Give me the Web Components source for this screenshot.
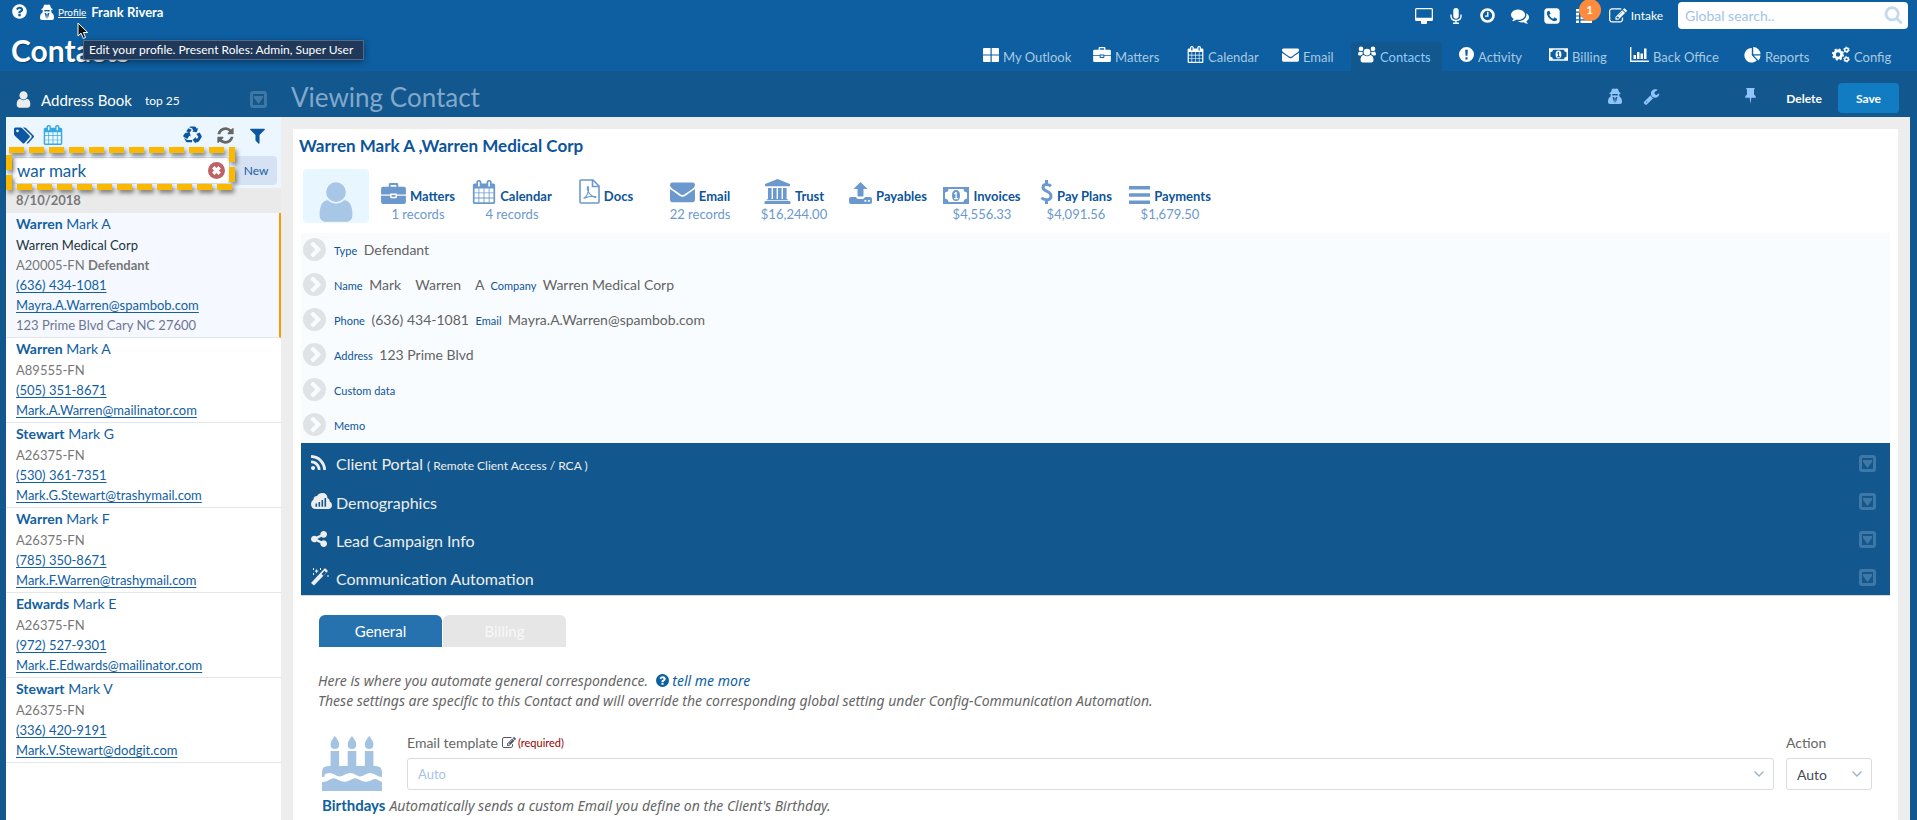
<!DOCTYPE html>
<html lang="en">
<head>
<meta charset="utf-8">
<title>Contacts</title>
<style>
html, body { margin: 0; }
body { font-family: Lato, "Noto Sans", sans-serif; font-size: 13px; line-height: 20px; color: #666; background: #12578d; }
</style>
</head>
<body>
<crm-app></crm-app>
<script>
const FA = '0 0 1792 1792';
const ICONS = {
  user: [FA, '<path d="M1536 1399q0 109-62.5 187t-150.5 78h-854q-88 0-150.5-78t-62.5-187q0-85 8.5-160.5t31.5-152 58.5-131 94-89 134.5-34.5q131 128 313 128t313-128q76 0 134.5 34.5t94 89 58.5 131 31.5 152 8.5 160.5zm-256-887q0 159-112.5 271.5t-271.5 112.5-271.5-112.5-112.5-271.5 112.5-271.5 271.5-112.5 271.5 112.5 112.5 271.5z"/>'],
  help: [FA, '<path d="M1024 1376v-192q0-14-9-23t-23-9h-192q-14 0-23 9t-9 23v192q0 14 9 23t23 9h192q14 0 23-9t9-23zm256-672q0-88-55.5-163t-138.5-116-170-41q-243 0-371 213-15 24 8 42l132 100q7 6 19 6 16 0 25-12 53-68 86-92 34-24 86-24 48 0 85.5 26t37.5 59q0 38-20 61t-68 45q-63 28-115.5 86.5t-52.5 125.5v36q0 14 9 23t23 9h192q14 0 23-9t9-23q0-19 21.5-49.5t54.5-49.5q32-18 49-28.5t46-35 44.5-48 28-60.5 12.5-81zm384 192q0 209-103 385.5t-279.5 279.5-385.5 103-385.5-103-279.5-279.5-103-385.5 103-385.5 279.5-279.5 385.5-103 385.5 103 279.5 279.5 103 385.5z"/>'],
  alert: ['0 0 16 16', '<path fill-rule="evenodd" d="M8 0a8 8 0 1 1 0 16A8 8 0 0 1 8 0zM6.6 2.8l.4 6.6h2l.4-6.6zM6.8 11v2.4h2.4V11z"/>'],
  calendar: [FA, '<path d="M192 1664h288v-288h-288v288zm352 0h320v-288h-320v288zm-352-352h288v-320h-288v320zm352 0h320v-320h-320v320zm-352-384h288v-288h-288v288zm736 736h320v-288h-320v288zm-384-736h320v-288h-320v288zm768 736h288v-288h-288v288zm-384-352h320v-320h-320v320zm-352-864v-288q0-13-9.5-22.5t-22.5-9.5h-64q-13 0-22.5 9.5t-9.5 22.5v288q0 13 9.5 22.5t22.5 9.5h64q13 0 22.5-9.5t9.5-22.5zm736 864h288v-320h-288v320zm-384-384h320v-288h-320v288zm384 0h288v-288h-288v288zm32-480v-288q0-13-9.5-22.5t-22.5-9.5h-64q-13 0-22.5 9.5t-9.5 22.5v288q0 13 9.5 22.5t22.5 9.5h64q13 0 22.5-9.5t9.5-22.5zm384-64v1280q0 52-38 90t-90 38h-1408q-52 0-90-38t-38-90v-1280q0-52 38-90t90-38h128v-96q0-66 47-113t113-47h64q66 0 113 47t47 113v96h384v-96q0-66 47-113t113-47h64q66 0 113 47t47 113v96h128q52 0 90 38t38 90z"/>'],
  mail: [FA, '<path d="M1792 710v794q0 66-47 113t-113 47h-1472q-66 0-113-47t-47-113v-794q44 49 101 87 362 246 497 345 57 42 92.5 65.5t94.5 48 110 24.5h2q51 0 110-24.5t94.5-48 92.5-65.5q170-123 498-345 57-39 100-87zm0-294q0 79-49 151t-122 123q-376 261-468 325-10 7-42.5 31t-54 38.5-52 32.5-57.5 27-50 9h-2q-23 0-50-9t-57.5-27-52-32.5-54-38.5-42.5-31q-91-64-262-182.5t-205-142.5q-62-42-117-115.5t-55-136.5q0-78 41.5-130t118.5-52h1472q65 0 112.5 47t47.5 113z"/>'],
  search: [FA, '<path d="M1216 832q0-185-131.5-316.5t-316.5-131.5-316.5 131.5-131.5 316.5 131.5 316.5 316.5 131.5 316.5-131.5 131.5-316.5zm512 832q0 52-38 90t-90 38q-54 0-90-38l-343-342q-179 124-399 124-143 0-273.5-55.5t-225-150-150-225-55.5-273.5 55.5-273.5 150-225 225-150 273.5-55.5 273.5 55.5 225 150 150 225 55.5 273.5q0 220-124 399l343 343q37 37 37 90z"/>'],
  rss: ['192 128 1408 1408', '<path d="M576 1344q0 80-56 136t-136 56-136-56-56-136 56-136 136-56 136 56 56 136zm512 123q2 28-17 48-18 21-47 21h-135q-25 0-43-16.5t-20-41.5q-22-229-184.5-391.5t-391.5-184.5q-25-2-41.5-20t-16.5-43v-135q0-29 21-47 17-17 43-17h5q160 13 306 80.5t259 181.5q114 113 181.5 259t80.5 306zm512 2q2 27-18 47-18 20-46 20h-143q-26 0-44.5-17.5t-19.5-42.5q-12-215-101-408.5t-231.5-336-336-231.5-408.5-102q-25-1-42.5-19.5t-17.5-43.5v-143q0-28 20-46 18-18 44-18h3q262 13 501.5 120t425.5 294q187 186 294 425.5t120 501.5z"/>'],
  refresh: [FA, '<path d="M1639 1056q0 5-1 7-64 268-268 434.5t-478 166.5q-146 0-282.5-55t-243.5-157l-129 129q-19 19-45 19t-45-19-19-45v-448q0-26 19-45t45-19h448q26 0 45 19t19 45-19 45l-137 137q71 66 161 102t187 36q134 0 250-65t186-179q11-17 53-117 8-23 30-23h192q13 0 22.5 9.5t9.5 22.5zm25-800v448q0 26-19 45t-45 19h-448q-26 0-45-19t-19-45 19-45l138-138q-148-137-349-137-134 0-250 65t-186 179q-11 17-53 117-8 23-30 23h-199q-13 0-22.5-9.5t-9.5-22.5v-7q65-268 270-434.5t480-166.5q146 0 284 55.5t245 156.5l130-129q19-19 45-19t45 19 19 45z"/>'],
  filter: [FA, '<path d="M1595 295q17 41-14 70l-493 493v742q0 42-39 59-13 5-25 5-27 0-45-19l-256-256q-19-19-19-45v-486l-493-493q-31-29-14-70 17-39 59-39h1280q42 0 59 39z"/>'],
  share: ['128 128 1536 1536', '<path d="M1344 1024q133 0 226.5 93.5t93.5 226.5-93.5 226.5-226.5 93.5-226.5-93.5-93.5-226.5q0-12 2-34l-360-180q-92 86-218 86-133 0-226.5-93.5t-93.5-226.5 93.5-226.5 226.5-93.5q126 0 218 86l360-180q-2-22-2-34 0-133 93.5-226.5t226.5-93.5 226.5 93.5 93.5 226.5-93.5 226.5-226.5 93.5q-126 0-218-86l-360 180q2 22 2 34t-2 34l360 180q92-86 218-86z"/>'],
  chevron: ['128 128 1536 1536', '<path d="M845 1395l454-454q19-19 19-45t-19-45l-454-454q-19-19-45-19t-45 19l-102 102q-19 19-19 45t19 45l307 307-307 307q-19 19-19 45t19 45l102 102q19 19 45 19t45-19zm819-499q0 209-103 385.5t-279.5 279.5-385.5 103-385.5-103-279.5-279.5-103-385.5 103-385.5 279.5-279.5 385.5-103 385.5 103 279.5 279.5 103 385.5z"/>'],
  edit: [FA, '<path d="M888 1184l116-116-152-152-116 116v56h96v96h56zm440-720q-16-16-33 1l-350 350q-17 17-1 33t33-1l350-350q17-17 1-33zm80 594v190q0 119-84.5 203.5t-203.5 84.5h-832q-119 0-203.5-84.5t-84.5-203.5v-832q0-119 84.5-203.5t203.5-84.5h832q63 0 117 25 15 7 18 23 3 17-9 29l-49 49q-14 14-32 8-23-6-45-6h-832q-66 0-113 47t-47 113v832q0 66 47 113t113 47h832q66 0 113-47t47-113v-126q0-13 9-22l64-64q15-15 35-7t20 29zm-96-738l288 288-672 672h-288v-288zm444 132l-92 92-288-288 92-92q28-28 68-28t68 28l152 152q28 28 28 68t-28 68z"/>'],
  wrench: [FA, '<path d="M448 1472q0-26-19-45t-45-19-45 19-19 45 19 45 45 19 45-19 19-45zm644-420l-682 682q-37 37-90 37-52 0-91-37l-106-108q-38-36-38-90 0-53 38-91l681-681q39 98 114.5 173.5t173.5 114.5zm634-435q0 39-23 106-47 134-164.5 217.5t-258.5 83.5q-185 0-316.5-131.5t-131.5-316.5 131.5-316.5 316.5-131.5q58 0 121.5 16.5t107.5 46.5q16 11 16 28t-16 28l-293 169v224l193 107q5-3 79-48.5t135.5-81 70.5-35.5q15 0 23.5 10t8.5 25z"/>'],
  comments: [FA, '<path d="M1408 768q0 139-94 257t-256.5 186.5-353.5 68.5q-86 0-176-16-124 88-278 128-36 9-86 16h-3q-11 0-20.5-8t-11.5-21q-1-3-1-6.5t.5-6.5 2-6l2.5-5 3.5-5.5 4-5 4.5-5 4-4.5q5-6 23-25t26-29.5 22.5-29 25-38.5 20.5-44q-124-72-195-177t-71-224q0-139 94-257t256.5-186.5 353.5-68.5 353.5 68.5 256.5 186.5 94 257zm384 256q0 120-71 224.5t-195 176.5q10 24 20.5 44t25 38.5 22.5 29 26 29.5 23 25q1 1 4 4.5t4.5 5 4 5 3.5 5.5l2.5 5 2 6 .5 6.5-1 6.5q-3 14-13 22t-22 7q-50-7-86-16-154-40-278-128-90 16-176 16-271 0-472-132 58 4 88 4 161 0 309-45t264-129q125-92 192-212t67-254q0-77-23-152 129 71 204 178t75 230z"/>'],
  phone: [FA, '<path d="M1408 1193q0-11-2-16t-18-16.5-40.5-25-47.5-26.5-45.5-25-28.5-15q-5-3-19-13t-25-15-21-5q-15 0-36.5 20.5t-39.5 45-38.5 45-33.5 20.5q-7 0-16.5-3.5t-15.5-6.5-17-9.5-14-8.5q-99-55-170-126.5t-127-170.5q-2-3-8.5-14t-9.5-17-6.5-15.5-3.5-16.5q0-13 20.5-33.5t45-38.5 45-39.5 20.5-36.5q0-10-5-21t-15-25-13-19q-3-6-15-28.5t-25-45.5-26.5-47.5-25-40.5-16.5-18-16-2q-48 0-101 22-46 21-80 94.5t-34 130.5q0 16 2.5 34t5 30.5 9 33 10 29.5 12.5 33 11 30q60 164 216.5 320.5t320.5 216.5q6 2 30 11t33 12.5 29.5 10 33 9 30.5 5 34 2.5q57 0 130.5-34t94.5-80q22-53 22-101zm256-777v960q0 119-84.5 203.5t-203.5 84.5h-960q-119 0-203.5-84.5t-84.5-203.5v-960q0-119 84.5-203.5t203.5-84.5h960q119 0 203.5 84.5t84.5 203.5z"/>'],
  caret: ['0 0 17 17', '<path fill-rule="evenodd" d="M3 0h11a3 3 0 0 1 3 3v11a3 3 0 0 1-3 3H3a3 3 0 0 1-3-3V3a3 3 0 0 1 3-3zm0 3v11h11V3z"/><path d="M4 5h9v2l-4.5 6L4 7z"/>'],
  spy: ['0 0 14 16', '<path fill-rule="evenodd" d="M4 1Q5 0 6 .8h2Q9 0 10 1l1 3 1.500 1v1h-1.300l.3 2.400Q14 9.500 14 13v1q0 2-2 2H2q-2 0-2-2v-1q0-3.500 2.500-4.600L2.800 6H1.500V5L3 4zM4.300 6v1.500h2.200l.5-.8.5.8h2.200V6zM4.600 9l1.700 6 .5-4.500L6 9zM9.400 9l-1.700 6-.5-4.500L8 9z"/>'],
  grid: ['0 0 16 14', '<path d="M1 0h6.500v6.400H0V1q0-1 1-1zM8.700 0H15q1 0 1 1v5.400H8.700zM0 7.600h7.500V14H1q-1 0-1-1zM8.700 7.600H16V13q0 1-1 1H8.700z"/>'],
  briefcase: ['0 0 26 22', '<path fill-rule="evenodd" d="M8 4V1.500Q8 0 9.500 0h7Q18 0 18 1.500V4h6q2 0 2 2v6h-9.500v-1h-7v1H0V6q0-2 2-2zM10 4h6V2h-6zM0 13.300h9.500V15q0 1 1 1h5q1 0 1-1v-1.700H26V20q0 2-2 2H2q-2 0-2-2zM11 12.500h4v2h-4z"/>'],
  users: ['0 0 18 16', '<circle cx="3" cy="2.400" r="2.300"/><circle cx="15" cy="2.400" r="2.300"/><circle cx="9" cy="5.600" r="3.400"/><path d="M1.500 5Q3 6 4.700 5.200L4.600 8Q3.500 8 2.800 9H1.600Q0 9 0 7.800 0 5.500 1.500 5zM16.500 5Q15 6 13.300 5.200l.1 2.800q1.100 0 1.800 1h1.200Q18 9 18 7.800 18 5.500 16.500 5zM5.700 8.500Q9 11.200 12.300 8.500q3.200.5 3.200 5 0 2.500-2.300 2.500H4.800q-2.300 0-2.300-2.500 0-4.500 3.200-5z"/>'],
  money: ['0 0 26 17', '<path fill-rule="evenodd" d="M0 0h26v17H0zM5.500 2q0 3-3.500 3.500v6Q5.500 12 5.500 15h15q0-3 3.500-3.500v-6Q20.500 5 20.500 2zM13 3q4 0 4 5.500T13 14 9 8.500 13 3zm-.5 2L11 6.700l.7.8.8-.5V11H11v1.200h4.200V11h-1.400V5z"/>'],
  chart: ['0 0 19 15', '<path d="M0 0h1.400v13.600H19V15H0zM3.500 8H6v4H3.500zM7 5h2.500v7H7zM10.500 6.500H13V12h-2.500zM14 1.500h2.500V12H14z"/>'],
  pie: ['0 0 16 16', '<path d="M7.300 1v7.300l5 5.200A7.300 7.300 0 1 1 7.300 1zM8.700 0A7.300 7.300 0 0 1 16 7.300H8.700zM9.200 8.600H16a7 7 0 0 1-2 4.800z"/>'],
  cogs: ['0 0 18 16', '<circle cx="6" cy="8" r="3.600" fill="none" stroke="currentColor" stroke-width="2.800"/><circle cx="6" cy="8" r="5" fill="none" stroke="currentColor" stroke-width="2.200" stroke-dasharray="1.960 1.966"/><g fill="none" stroke="currentColor"><circle cx="14.500" cy="3.300" r="1.800" stroke-width="1.500"/><circle cx="14.500" cy="3.300" r="2.800" stroke-dasharray="1.400 1.530"/><circle cx="14.500" cy="12.700" r="1.800" stroke-width="1.500"/><circle cx="14.500" cy="12.700" r="2.800" stroke-dasharray="1.400 1.530"/></g>'],
  desktop: ['0 0 18 16', '<path fill-rule="evenodd" d="M1.500 0h15Q18 0 18 1.500v10q0 1.500-1.500 1.500H12v1.500q.300 1.500-1 1.500H7q-1.300 0-1-1.500V13H1.500Q0 13 0 11.500v-10Q0 0 1.500 0zM1.300 1.300v8.400h15.400V1.300z"/>'],
  mic: ['0 0 12 16', '<path d="M6 0q2.700 0 2.700 2.700V8Q8.700 10.700 6 10.700T3.300 8V2.700Q3.300 0 6 0z"/><path d="M1 6.500V8q0 4.500 5 4.500T11 8V6.500M6 12.500V15M3 15.200h6" fill="none" stroke="currentColor" stroke-width="1.400"/>'],
  clock: ['0 0 16 16', '<circle cx="8" cy="8" r="6.400" fill="none" stroke="currentColor" stroke-width="2.800"/><path d="M8.300 4v4.700H5.300" fill="none" stroke="currentColor" stroke-width="1.500"/>'],
  list: ['0 0 16 14', '<path d="M0 0h3v2.600H0zM4.500 0H16v2.600H4.500zM0 3.800h3v2.600H0zM4.500 3.800H16v2.600H4.500zM0 7.600h3v2.600H0zM4.500 7.600H16v2.600H4.500zM0 11.400h3V14H0zM4.500 11.400H16V14H4.500z"/>'],
  pin: ['0 0 11 16', '<path d="M2 0h7q.9 0 .9.700t-.9.800v5q2 1.200 2 3.300H6.300L5.500 16l-.8-6.200H0q0-2.100 2-3.300v-5q-.9-.1-.9-.8T2 0z"/>'],
  tags: ['0 0 20 17', '<path fill-rule="evenodd" d="M1.500.5h5q1 0 2 1l7 7q1 1 0 2l-5 5.500q-1 1-2 0L1 9Q0 8 0 7V2Q0 .5 1.500.5zM3.500 2.500a1.400 1.400 0 1 0 .01 0z"/><path d="M9 .5h1.500q1 0 2 1l7 7q1 1 0 2l-5 5.500q-1 1-2 .3l4.600-5.300q1.200-1.500 0-2.700z"/>'],
  recycle: ['0 0 20 18', '<path d="M6.500 1Q7 0 8 0h4q1 0 1.600 1l1 1.500L16 1.700l-1.500 5-5-1 1.400-.9L9.500 2zM5.700 2l3.500 1.800L6.800 7.500 3.400 5.400zM2 7.500l5-1 1.200 5-1.500-.8-2.200 3.800L.5 11.800Q0 11 .5 10l1.500-2zM1 13l3.500 2.500h5V18H4.500q-1 0-1.500-1zM17.500 7l2 3.500q.5 1 0 1.800l-2.300 4Q16.500 18 15 18h-1.500v1.500l-3.500-4 3.500-3.500v1.700h1.700l1-2-2.200-3z" transform="scale(1 .92)"/>'],
  clear: ['0 0 16 16', '<circle cx="8" cy="8" r="8"/><path d="M5 5l6 6M11 5l-6 6" stroke="#fff" stroke-width="3.200"/>'],
  pdf: ['0 0 21 25', '<path d="M1 2q0-1 1-1h12l6 6v16q0 1-1 1H2q-1 0-1-1zM13.500 1v6.500H20" fill="none" stroke="currentColor" stroke-width="1.600"/><path d="M4.500 19.500q3-1 5-7.500.5-3.500-.5-4.500-1.500 1 0 4.500 2 4.500 7 6.500 1.500 0 .5-1-5-1-12 2z" fill="none" stroke="currentColor" stroke-width="1.100"/>'],
  bank: ['0 0 27 25', '<path d="M13.500 0L26 5v1.700q0 .6-1 .6H2q-1 0-1-.6V5zM4 9h3.600v11H9V9h3.600v11H14V9h3.600v11H19V9h3.600v11q1.600.2 1.600 1.200H2.500Q2.500 20.200 4 20zM1.500 22h24q1 0 1 1.500V25H.5v-1.500q0-1.500 1-1.500z"/>'],
  upload: ['0 0 23 22', '<path fill-rule="evenodd" d="M11.500 0l7 7h-4v6.500q0 1-1 1h-4q-1 0-1-1V7h-4zM0 17q0-2 2-2h5q.7 2 2.500 2h4q1.800 0 2.500-2h5q2 0 2 2v3q0 2-2 2H2q-2 0-2-2zM15.500 18v1.800h1.800V18zM19 18v1.800h1.800V18z"/>'],
  dollar: ['0 0 13 24', '<path d="M11 6.200Q9 4.400 6.500 4.400 3 4.400 3 7.300q0 2.500 3.500 3.900 4.500 1.700 4.500 5 0 3.600-4.500 3.600-3 0-5-2M6.500 0v4.500M6.500 19.500V24" fill="none" stroke="currentColor" stroke-width="3"/>'],
  bars: ['0 0 21 18', '<path d="M0 0h21v3.600H0zM0 7.200h21v3.600H0zM0 14.400h21V18H0z"/>'],
  cloud: ['0 0 21 16', '<path fill-rule="evenodd" d="M5 16q-5 0-5-5 0-3 2.500-4.500Q2.500 3 6 3 7.500 0 11.500 0q4.500 0 5 5Q19 6 18.800 8.500 21 9.500 21 12q0 4-4 4zM4.500 10.500v3.200h1.600v-3.200zM7.500 9v4.700h1.600V9zM10.500 7v6.700h1.600V7zM13.500 5v8.700h1.600V5z"/>'],
  wand: ['0 0 18 18', '<path fill-rule="evenodd" d="M14.500.5l2 2Q17 3 16.500 3.500L3 17.500 0 15 13.500.5q.5-.5 1 0zM10.500 6l1.700 1.700 3-3.200-1.700-1.700z"/><path d="M5.500.8l.7 1.600 1.600.7-1.600.7-.7 1.600-.7-1.600-1.600-.7 1.600-.7zM2 0h1v2H2zM9 0h1v2H9zM2 5h1v2H2zM16.500 7h1v2h-1z"/>'],
  cake: ['0 0 60 55', '<path transform="scale(1.071 1)" d="M12 0q4 5 4 8.500Q16 13 12 13T8 8.500Q8 5 12 0zM28 0q4 5 4 8.500Q32 13 28 13t-4-4.500Q24 5 28 0zM44 0q4 5 4 8.500Q48 13 44 13t-4-4.500Q40 5 44 0zM8 15h8v15h8V15h8v15h8V15h8v15h2q6 0 6 6v5q-3 0-6-2.200-5-3.500-10 0-4.500 3.500-8.500 0-5-3.800-10.500 0-4.500 3.500-9 0-5-3.500-10 0Q4 41 0 41v-5q0-6 6-6h2zM0 46q4 0 7-2.300 4-3 8 0 6 4.300 12 0 4-3 8 0 6 4.300 12 0Q50 42 54 45l2 1v9H0z"/>'],
  down: ['0 0 12 8', '<path d="M1.500 1.500L6 6l4.500-4.500" fill="none" stroke="currentColor" stroke-width="1.400"/>'],
  cursor: ['0 0 12 18', '<path d="M1 1v13l3-2.800L6.300 16.500l2.300-1L6.400 10.500h4.300z" fill="#111" stroke="#fff" stroke-width="1"/>']
};

/* Registers an element whose shadow root is built from a template string. */
function component(name, css, html) {
  customElements.define(name, class extends HTMLElement {
    connectedCallback() {
      if (this.shadowRoot) return;
      const root = this.attachShadow({ mode: 'open' });
      root.innerHTML = '<style>*{box-sizing:border-box}' + css + '</style>' +
        (typeof html === 'function' ? html(this) : html);
    }
  });
}

component('x-icon',
  ':host{display:inline-flex;flex:none;vertical-align:middle}svg{display:block;width:100%;height:100%;fill:currentColor}',
  el => {
    const [box, art] = ICONS[el.getAttribute('name')];
    el.style.width = el.getAttribute('w') + 'px';
    el.style.height = (el.getAttribute('h') || el.getAttribute('w')) + 'px';
    return `<svg viewBox="${box}" aria-hidden="true">${art}</svg>`;
  });

component('nav-link', `
  :host{display:flex;justify-content:flex-start}
  a{display:flex;align-items:center;gap:4px;height:29px;padding:0 11px 0 7px;color:#a9c9e2;text-decoration:none;border-radius:4px 4px 0 0;white-space:nowrap}
  x-icon{color:#fff;margin-bottom:4px}
  :host([current]) a{background:#12578d;color:#90cbff}`,
  el => `<a href="#"><x-icon name="${el.getAttribute('icon')}" w="${el.getAttribute('w')}" h="${el.getAttribute('h')}"></x-icon><slot></slot></a>`);

component('top-bar', `
  :host{display:block;background:#0d5fa1;color:#fff}
  .row{display:flex;align-items:center;justify-content:space-between}
  .one{height:31px;padding:0 9px 0 11px}
  .two{height:40px;padding:0 12px 0 11px;align-items:flex-end}
  .me,.tools{display:flex;align-items:center}
  .me{position:relative;margin-bottom:8px}
  .me a{color:#fff;font-size:10px;margin:0 5px 0 4px}
  .me x-icon+x-icon{margin-left:12px}
  .cell{display:flex;justify-content:center;width:32px;position:relative}
  .badge{position:absolute;left:11px;top:-10px;width:22px;height:22px;border-radius:50%;background:#ff8b3c;font:bold 11px/22px Lato,sans-serif;text-align:center}
  .intake{display:flex;align-items:center;gap:4px;color:#fff;font-size:12px;text-decoration:none;margin:0 15px 0 9px}
  .search{display:flex;align-items:center;width:230px;height:27px;background:#fff;border-radius:4px;padding:0 5px 0 7px;color:#c3d9ee}
  .search x-icon{margin:0 0 2px}
  input{flex:1;min-width:0;border:0;outline:0;background:none;font:14px Lato,sans-serif;padding:0}
  input::placeholder{color:#9fc4e8}
  h1{margin:0 0 2px;font:bold 30px/38px Lato,sans-serif;text-shadow:1px 1px 1px #0a3f70}
  nav{display:grid;grid-template-columns:110px 94px 95px 76px 101px 90px 81px 114px 88px 80px}
  .arrow{position:absolute;left:66px;top:20px;z-index:3}
  .tip{position:absolute;left:72px;top:38px;z-index:2;padding:0 10px 0 5px;background:#20395a;border:1px solid #536a86;box-shadow:0 2px 6px #0006;font:12px/18px Lato,sans-serif;white-space:nowrap}`, `
  <div class="row one">
    <div class="me"><x-icon name="help" w="17"></x-icon><x-icon name="spy" w="14" h="16"></x-icon><a href="#">Profile</a><b>Frank Rivera</b>
      <x-icon class="arrow" name="cursor" w="12" h="18"></x-icon><span class="tip" role="tooltip">Edit your profile. Present Roles: Admin, Super User</span></div>
    <div class="tools">
      <span class="cell"><x-icon name="desktop" w="18" h="16"></x-icon></span>
      <span class="cell"><x-icon name="mic" w="12" h="16"></x-icon></span>
      <span class="cell"><x-icon name="clock" w="15"></x-icon></span>
      <span class="cell"><x-icon name="comments" w="18"></x-icon></span>
      <span class="cell"><x-icon name="phone" w="18"></x-icon></span>
      <span class="cell"><x-icon name="list" w="16" h="14"></x-icon><span class="badge">1</span></span>
      <a class="intake" href="#"><x-icon name="edit" w="18"></x-icon>Intake</a>
      <label class="search"><input aria-label="Global search" placeholder="Global search.."><x-icon name="search" w="19"></x-icon></label>
    </div>
  </div>
  <div class="row two"><h1>Contacts</h1>
    <nav>
      <nav-link icon="grid" w="16" h="14">My Outlook</nav-link>
      <nav-link icon="briefcase" w="18" h="15">Matters</nav-link>
      <nav-link icon="calendar" w="17" h="17">Calendar</nav-link>
      <nav-link icon="mail" w="17" h="17">Email</nav-link>
      <nav-link icon="users" w="18" h="17" current>Contacts</nav-link>
      <nav-link icon="alert" w="15" h="15">Activity</nav-link>
      <nav-link icon="money" w="19" h="13">Billing</nav-link>
      <nav-link icon="chart" w="19" h="15">Back Office</nav-link>
      <nav-link icon="pie" w="17" h="16">Reports</nav-link>
      <nav-link icon="cogs" w="18" h="17">Config</nav-link>
    </nav>
  </div>`);

component('title-bar', `
  :host{display:flex;align-items:center;height:46px;background:#12578d;color:#fff;padding:0 18px 0 14px}
  .book{display:flex;align-items:center;flex:none;width:277px;padding-top:11px;padding-right:24px;font-size:15px}
  .book small{font-size:12px;margin:2px auto 0 13px}
  .book x-icon:first-child{margin-right:8px;color:#ececec}
  .fade{color:#3f77a5}
  h2{margin:6px auto 0 0;font:26px/32px Lato,sans-serif;color:#82a8cb}
  .act{display:flex;align-items:center;color:#90c5fb;padding-top:8px}
  .act x-icon{margin-bottom:4px}
  .spy{margin-right:21px}
  .pin{margin:0 17px 0 85px}
  button{border:0;background:none;color:#fff;font:bold 12px Lato,sans-serif;height:30px;padding:0;width:62px;border-radius:4px}
  .save{background:#127cc3;width:61px;margin-left:3px}`, `
  <div class="book"><x-icon name="user" w="19"></x-icon>Address Book <small>top 25</small><x-icon class="fade" name="caret" w="17"></x-icon></div>
  <h2>Viewing Contact</h2>
  <div class="act"><x-icon class="spy" name="spy" w="14" h="16"></x-icon><x-icon name="wrench" w="17"></x-icon><x-icon class="pin" name="pin" w="11" h="16"></x-icon><button>Delete</button><button class="save">Save</button></div>`);

component('contact-item', `
  :host{display:block;padding:0 10px 2px;border-bottom:1px solid #e4e7ea;color:#777}
  :host([selected]){background:#f5f9ff;border-right:2px solid #f90}
  div{height:20px;white-space:nowrap}
  .name{height:22px;font-size:14px;line-height:22px;color:#12609f}
  .org{color:#1c3440}.addr{color:#6d7592}
  a{color:#12609f;text-underline-offset:2px}`,
  el => {
    const a = n => el.getAttribute(n);
    return `<div class="name"><b>${a('last')}</b> ${a('first')}</div>` +
      (a('org') ? `<div class="org">${a('org')}</div>` : '') +
      `<div>${a('ref')}${a('role') ? ` <b>${a('role')}</b>` : ''}</div><div><a href="#">${a('phone')}</a></div><div><a href="#">${a('mail')}</a></div>` +
      (a('addr') ? `<div class="addr">${a('addr')}</div>` : '');
  });

component('contact-list', `
  :host{display:block;background:#fff}
  .head{background:#ecf6fe;height:71px}
  .tools{display:flex;align-items:center;height:36px;padding:0 14px 0 8px;color:#0c57a0}
  .cal{margin:0 auto 0 9px;color:#35a9e0}
  .sync{margin:0 13px 0 14px;color:#666}
  .find{display:flex;align-items:center;gap:5px;padding:3px 4px 0 6px;position:relative}
  label{flex:1;min-width:0;display:flex;align-items:center;height:27px;background:#fff;border:1px solid #d5dbe2;border-radius:4px;padding:0 4px;color:#bf6265}
  input{flex:1;min-width:0;border:0;outline:0;padding:0;background:none;font:17px Lato,sans-serif;color:#12609f}
  button{border:0;border-radius:4px;width:42px;height:29px;background:#d6e2f3;color:#12609f;font:12px Lato,sans-serif;padding:0}
  .mark{position:absolute;left:-3px;top:-8px;width:238px;height:49px;overflow:visible;filter:drop-shadow(2px 3px 2px #0007);pointer-events:none}
  .date{height:25px;line-height:25px;padding-left:10px;background:#eaeaea;font-weight:bold;color:#777}`, `
  <div class="head">
    <div class="tools"><x-icon name="tags" w="20" h="17"></x-icon><x-icon class="cal" name="calendar" w="20"></x-icon><x-icon name="recycle" w="19" h="18"></x-icon><x-icon class="sync" name="refresh" w="19"></x-icon><x-icon name="filter" w="19"></x-icon></div>
    <div class="find"><label><input aria-label="Find a contact" value="war mark"><x-icon name="clear" w="17"></x-icon></label><button>New</button>
      <svg class="mark" aria-hidden="true"><rect x="6" y="5" width="223" height="37" fill="none" stroke="#fbb800" stroke-width="6" stroke-dasharray="15 5"/></svg></div>
  </div>
  <div class="date">8/10/2018</div>
  <contact-item selected last="Warren" first="Mark A" org="Warren Medical Corp" ref="A20005-FN" role="Defendant" phone="(636) 434-1081" mail="Mayra.A.Warren@spambob.com" addr="123 Prime Blvd Cary NC 27600"></contact-item>
  <contact-item last="Warren" first="Mark A" ref="A89555-FN" phone="(505) 351-8671" mail="Mark.A.Warren@mailinator.com"></contact-item>
  <contact-item last="Stewart" first="Mark G" ref="A26375-FN" phone="(530) 361-7351" mail="Mark.G.Stewart@trashymail.com"></contact-item>
  <contact-item last="Warren" first="Mark F" ref="A26375-FN" phone="(785) 350-8671" mail="Mark.F.Warren@trashymail.com"></contact-item>
  <contact-item last="Edwards" first="Mark E" ref="A26375-FN" phone="(972) 527-9301" mail="Mark.E.Edwards@mailinator.com"></contact-item>
  <contact-item last="Stewart" first="Mark V" ref="A26375-FN" phone="(336) 420-9191" mail="Mark.V.Stewart@dodgit.com"></contact-item>`);

component('stat-link', `
  :host{display:flex;flex-direction:column;align-items:center;white-space:nowrap;color:#6c99cd}
  a{display:flex;align-items:flex-end;gap:4px;height:26px;color:#0d549b;font-weight:bold;text-decoration:none}
  span{line-height:16px}x-icon{color:#6c99cd}
  div{line-height:20px}`,
  el => `<a href="#"><x-icon name="${el.getAttribute('icon')}" w="${el.getAttribute('w')}" h="${el.getAttribute('h')}"></x-icon><span><slot></slot></span></a><div>${el.getAttribute('value') || ''}</div>`);

component('detail-row', `
  :host{display:flex;align-items:flex-start;gap:8px;height:35px;padding:5px 2px;color:#636363;font-size:14px}
  x-icon{color:#dfe3e6}
  p{margin:0;line-height:23px;white-space:pre}
  ::slotted(small){font-size:11px;color:#0d549b;margin-right:3px}
  ::slotted(small:not(:first-child)){margin-left:3px}`,
  '<x-icon name="chevron" w="23"></x-icon><p><slot></slot></p>');

component('section-bar', `
  :host{display:flex;align-items:center;height:38px;background:#12578d;color:#eee;font-size:16px;padding:5px 14px 0 10px}
  .ico{width:25px;display:flex;margin-bottom:4px}
  .t{flex:1}
  ::slotted(small){font-size:12px}
  .fade{color:#3f77a5;margin-bottom:2px}`,
  el => `<span class="ico"><x-icon name="${el.getAttribute('icon')}" w="${el.getAttribute('w')}" h="${el.getAttribute('h')}"></x-icon></span><span class="t"><slot></slot></span><x-icon class="fade" name="caret" w="17"></x-icon>`);

component('pick-field', `
  :host{display:flex;flex-direction:column}
  label{color:#666;font-size:14px;line-height:20px;margin-bottom:5px;display:flex;align-items:center;gap:4px}
  small{color:#900;font-size:11px}x-icon{color:#556}
  label x-icon{margin-right:-2px}
  .box{position:relative;display:flex}
  select{appearance:none;width:100%;height:32px;border:1px solid #d9dbdd;border-radius:3px;background:#fff;padding:0 10px;font:14px Lato,sans-serif;color:#444b55}
  :host([empty]) select{color:#a5c4e6;font-size:13px}
  .box x-icon{position:absolute;right:9px;top:12px;color:#9fb2c8;pointer-events:none}`,
  el => `<label for="s">${el.getAttribute('label')}${el.hasAttribute('required') ? '<x-icon name="edit" w="14"></x-icon><small>(required)</small>' : ''}</label>
  <div class="box"><select id="s"><option>Auto</option></select><x-icon name="down" w="12" h="8"></x-icon></div>`);

component('contact-panel', `
  :host{display:block;background:#fff;padding:0 8px}
  h3{margin:0 -2px;font:bold 17px/24px Lato,sans-serif;color:#0d549b;padding:5px 0 11px}
  .stats{display:grid;grid-template-columns:68px repeat(9,94px);padding:0 2px;height:64px}
  .face{display:flex;align-items:flex-end;justify-content:center;width:66px;height:54px;border-radius:4px;background:#e7f6ff;color:#a8c6e6;overflow:hidden}
  .face x-icon{margin-bottom:-2px}
  stat-link{padding-top:9px}
  .rows{background:#f9fcff}
  .bars{border-bottom:1px solid #cfd9e2}
  .auto{padding:19px 18px 0 16px}
  .tabs{display:flex;gap:1px;padding-left:2px}
  .tabs button{width:123px;height:32px;border:0;border-radius:6px 6px 0 0;background:#e6e6e6;color:#f8f8f8;font:15px Lato,sans-serif}
  .tabs .on{background:#2672ae;color:#fff}
  .note{margin:24px 0 0;padding-left:1px;font:italic 14px/19px "Noto Sans",sans-serif}
  a{color:#0d609f;text-decoration:none}
  a x-icon{margin:0 -1px 3px 3px}
  .form{display:grid;grid-template-columns:60px 1fr 86px;column-gap:12px;padding-left:5px;margin-top:23px}
  .form x-icon{color:#a4c3e3;margin-top:3px}
  .form pick-field[required]{margin-left:13px}
  .bday{margin:4px 5px 0;font:italic 14px/20px "Noto Sans",sans-serif}
  .bday b{color:#0d609f;font:bold 15px/20px Lato,sans-serif;margin-right:4px}`, `
  <h3>Warren Mark A ,Warren Medical Corp</h3>
  <div class="stats"><div class="face"><x-icon name="user" w="46"></x-icon></div>
    <stat-link icon="briefcase" w="25" h="21" value="1 records">Matters</stat-link>
    <stat-link icon="calendar" w="24" h="24" value="4 records">Calendar</stat-link>
    <stat-link icon="pdf" w="21" h="25">Docs</stat-link>
    <stat-link icon="mail" w="25" h="25" value="22 records">Email</stat-link>
    <stat-link icon="bank" w="27" h="25" value="$16,244.00">Trust</stat-link>
    <stat-link icon="upload" w="23" h="22">Payables</stat-link>
    <stat-link icon="money" w="26" h="17" value="$4,556.33">Invoices</stat-link>
    <stat-link icon="dollar" w="13" h="24" value="$4,091.56">Pay Plans</stat-link>
    <stat-link icon="bars" w="21" h="18" value="$1,679.50">Payments</stat-link>
  </div>
  <div class="rows">
    <detail-row><small>Type</small> Defendant</detail-row>
    <detail-row><small>Name</small> Mark    Warren    A <small>Company</small> Warren Medical Corp</detail-row>
    <detail-row><small>Phone</small> (636) 434-1081 <small>Email</small> Mayra.A.Warren@spambob.com</detail-row>
    <detail-row><small>Address</small> 123 Prime Blvd</detail-row>
    <detail-row><small>Custom data</small></detail-row>
    <detail-row><small>Memo</small></detail-row>
  </div>
  <div class="bars">
    <section-bar icon="rss" w="15" h="15">Client Portal <small>( Remote Client Access / RCA )</small></section-bar>
    <section-bar icon="cloud" w="21" h="16">Demographics</section-bar>
    <section-bar icon="share" w="16" h="16">Lead Campaign Info</section-bar>
    <section-bar icon="wand" w="18" h="18">Communication Automation</section-bar>
  </div>
  <div class="auto">
    <div class="tabs"><button class="on">General</button><button>Billing</button></div>
    <p class="note">Here is where you automate general correspondence. <a href="#"><x-icon name="help" w="15"></x-icon> tell me more</a><br>These settings are specific to this Contact and will override the corresponding global setting under Config-Communication Automation.</p>
    <div class="form"><x-icon name="cake" w="60" h="55"></x-icon>
      <pick-field label="Email template" required empty></pick-field>
      <pick-field label="Action"></pick-field></div>
    <p class="bday"><b>Birthdays</b>Automatically sends a custom Email you define on the Client's Birthday.</p>
  </div>`);

component('crm-app', `
  :host{display:flex;flex-direction:column;min-height:100vh}
  main{flex:1;display:grid;grid-template-columns:275px 1fr;margin:0 7px 0 6px;background:#ededed}
  contact-panel{margin:12px 12px 0}`,
  '<top-bar></top-bar><title-bar></title-bar><main><contact-list></contact-list><contact-panel></contact-panel></main>');
</script>
</body>
</html>
